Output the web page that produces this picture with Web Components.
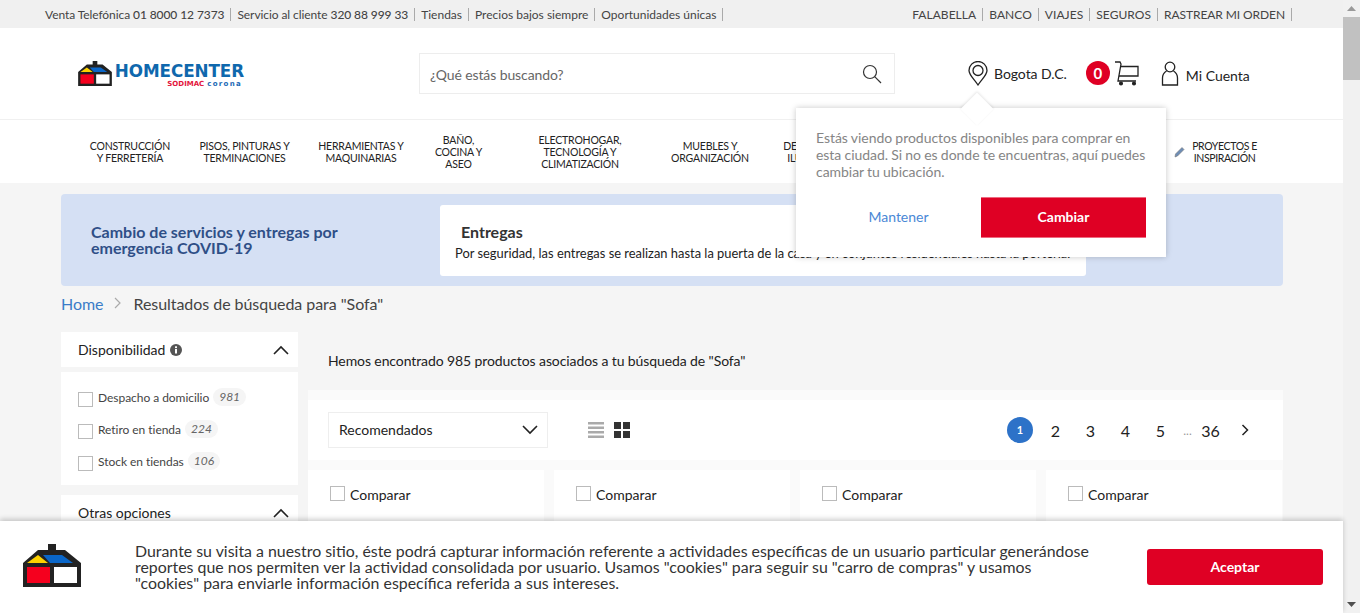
<!DOCTYPE html>
<html lang="es"><head><meta charset="utf-8"><title>Homecenter</title>
<style>
html,body{margin:0;padding:0;height:613px;overflow:hidden;background:#f5f5f5}
body{font-family:Lato,"Liberation Sans",sans-serif;color:#333}
hc-app{display:flex;width:1360px;height:613px;overflow:hidden;position:relative}
</style></head><body>
<hc-app></hc-app>
<script>
const CHEV_UP='<svg width="16" height="10" viewBox="0 0 16 10"><path d="M1 9L8 2l7 7" fill="none" stroke="#222" stroke-width="1.6"/></svg>';
function def(name,html){customElements.define(name,class extends HTMLElement{constructor(){super();this.attachShadow({mode:'open'}).innerHTML=typeof html==='function'?html(this):html;}});}

const HOUSE=`<svg viewBox="0 0 58 43" width="100%" height="100%"><path d="M25 0h8v6h9l16 13v24H0V19L15 6h10z" fill="#222"/><path d="M4 19l11-8 10 8z" fill="#fed200"/><path d="M20 11h19l11 8H27z" fill="#0a66c8"/><rect x="4" y="23" width="23" height="16" fill="#f5001e"/><rect x="31" y="23" width="23" height="16" fill="#fff"/></svg>`;

def('hc-scrollbar',`<style>:host{display:flex;flex-direction:column;width:17px;flex:none;background:#f1f1f1;height:613px}
.b{height:17px;display:flex;align-items:center;justify-content:center;flex:none}.t{height:63px;background:#c1c1c1;flex:none}.s{flex:1}</style>
<div class="b"><svg width="9" height="5"><path d="M0 5L4.500 0 9 5z" fill="#9a9a9a"/></svg></div><div class="t"></div><div class="s"></div>
<div class="b"><svg width="9" height="5"><path d="M0 0h9L4.500 5z" fill="#505050"/></svg></div>`);

def('hc-topbar',`<style>:host{display:flex;justify-content:space-between;height:28px;background:#f0f0f0;font-size:12px;color:#444;padding:0 51px 0 45px;box-sizing:border-box;align-items:center;white-space:nowrap}
.g{display:flex;align-items:center}span{padding-right:6px;margin-right:6px;border-right:1px solid #aaa;line-height:13px;display:block}.up span{letter-spacing:.05px}.ph{letter-spacing:-.08px}</style>
<div class="g"><span class="ph">Venta Telefónica <b style="font-weight:500">01 8000 12 7373</b></span><span class="ph">Servicio al cliente <b style="font-weight:500">320 88 999 33</b></span><span>Tiendas</span><span>Precios bajos siempre</span><span>Oportunidades únicas</span></div>
<div class="g up"><span>FALABELLA</span><span>BANCO</span><span>VIAJES</span><span>SEGUROS</span><span style="margin-right:0;letter-spacing:-.08px">RASTREAR MI ORDEN</span></div>`);

def('hc-logo',`<style>:host{display:flex;align-items:flex-start;gap:3px;width:168px;height:26px}
.h{width:34px;height:25px;flex:none}.t{display:flex;flex-direction:column;align-items:flex-end;width:129px;flex:none}
.m{font:700 16.800px/16px "DejaVu Sans",sans-serif;color:#0f68ad;letter-spacing:-.1px;margin-top:2px;white-space:nowrap}
.s{font:700 7px/8px "DejaVu Sans",sans-serif;margin-top:1px;padding-right:2px;white-space:nowrap}.s b{color:#e3143c}.s i{font-style:normal;color:#1c69b5;letter-spacing:1.3px;margin-left:3px}</style>
<div class="h">${HOUSE}</div><div class="t"><div class="m">HOMECENTER</div><div class="s"><b>SODIMAC</b><i>corona</i></div></div>`);

def('hc-search',`<style>:host{display:flex;align-items:center;justify-content:space-between;width:476px;height:41px;box-sizing:border-box;border:1px solid #ededed;padding:0 12px 0 10px;font-size:14px;color:#666;background:#fff}span{position:relative;top:1px;letter-spacing:-.1px}</style>
<span>¿Qué estás buscando?</span><svg width="20" height="20" viewBox="0 0 20 20" fill="none" stroke="#333" stroke-width="1.200"><circle cx="8" cy="8" r="6.500"/><path d="M12.700 12.700L19 19"/></svg>`);

def('hc-header',`<style>:host{display:flex;align-items:center;height:92px;background:#fff;box-sizing:border-box;border-bottom:1px solid #f0f0f0;padding:0 0 0 78px;color:#222}
hc-logo{margin-right:173px;margin-top:1px}hc-search{margin-right:73px}
.loc{display:flex;align-items:center;gap:6px;font-size:14px;margin-right:19px;margin-top:-1px;letter-spacing:-.05px}
.cart{display:flex;align-items:center;gap:4px;margin-right:21px;margin-top:-1px}
.n{width:24px;height:24px;border-radius:50%;background:#df0024;color:#fff;font:700 15px/24px Lato,sans-serif;text-align:center}
.acc{display:flex;align-items:center;gap:7px;font-size:14px;margin-top:-1px}.acc span{padding-top:4px}</style>
<hc-logo></hc-logo><hc-search></hc-search>
<div class="loc"><svg width="20" height="25" viewBox="0 0 20 25" fill="none" stroke="#222" stroke-width="1.300"><path d="M10 24C6 18 1 14 1 9.500a9 9 0 0 1 18 0C19 14 14 18 10 24z"/><circle cx="10" cy="9.500" r="5"/></svg><span>Bogota D.C.</span></div>
<div class="cart"><div class="n">0</div><svg width="26" height="25" viewBox="0 0 26 25" fill="none" stroke="#222" stroke-width="1.300"><path d="M1 1h5l1 2-3 17h18"/><path d="M6.500 5.500H24v9.500H5"/><circle cx="7" cy="22.500" r="1.400" fill="#222"/><circle cx="20" cy="22.500" r="1.400" fill="#222"/></svg></div>
<div class="acc"><svg width="18" height="25" viewBox="0 0 18 25" fill="none" stroke="#222" stroke-width="1.300"><circle cx="9" cy="6" r="4.800"/><path d="M5.500 10C2.500 12 1.500 14 1.500 17v7h15v-7c0-3-1-5-4-7"/></svg><span>Mi Cuenta</span></div>`);

def('hc-nav-item',h=>`<style>:host{display:flex;align-items:center;justify-content:center;gap:7px;flex:none;width:${h.getAttribute('w')}px;box-sizing:border-box;text-align:center;font-size:10.500px;line-height:12px;color:#222;letter-spacing:-.2px}</style><slot></slot>`);
def('hc-nav',`<style>:host{display:flex;height:63px;background:#fff;padding-left:72px;align-items:center}</style><slot></slot>`);

def('hc-covid',`<style>:host{display:flex;height:92px;background:#d5e0f4;border-radius:4px;box-sizing:border-box;padding:11px 0 10px 30px;margin:11px 60px 0 61px}
h2{margin:-1px 0 0;width:349px;box-sizing:border-box;padding-right:70px;font:700 16px/16px Lato,sans-serif;color:#2f4f87;align-self:center;flex:none}
.c{width:646px;background:#fff;border-radius:3px;box-sizing:border-box;padding:17px 0 0 15px;overflow:hidden}
h3{margin:0 0 4px 6px;font:700 16px/19px Lato,sans-serif;color:#333}p{margin:0;font-size:12.900px;line-height:16px;color:#222;white-space:nowrap}</style>
<h2>Cambio de servicios y entregas por emergencia COVID-19</h2><div class="c"><h3>Entregas</h3><p>Por seguridad, las entregas se realizan hasta la puerta de la casa y en conjuntos residenciales hasta la portería.</p></div>`);

def('hc-crumb',`<style>:host{display:flex;align-items:center;height:20px;margin:7px 0 0 61px;font-size:16px;color:#444;letter-spacing:-.05px}a{color:#3a7cc8}svg{margin:0 12px 0 11px}</style>
<a>Home</a><svg width="7" height="12" viewBox="0 0 7 12" fill="none" stroke="#aaa" stroke-width="1.200"><path d="M1 1l5 5-5 5"/></svg><span>Resultados de búsqueda para "Sofa"</span>`);

def('hc-filter-head',h=>`<style>:host{display:flex;align-items:center;justify-content:space-between;height:35px;background:#fff;padding:0 9px 0 17px;font-size:14px;color:#222}.l{display:flex;align-items:center;gap:5px}</style>
<div class="l"><slot></slot></div>${CHEV_UP}`);
def('hc-check',h=>`<style>:host{display:flex;align-items:center;height:32px;font-size:12px;color:#444}i{width:15px;height:15px;border:1px solid #bbb;box-sizing:border-box;margin-right:5px;flex:none;position:relative;top:1px}span{letter-spacing:-.04px;position:relative;top:-1px}em{font-size:12px;color:#666;background:#f5f5f5;border-radius:9px;padding:0 6px;line-height:18px;margin-left:4px;position:relative;top:-1px}</style>
<i></i><span><slot></slot></span><em>${h.getAttribute('n')}</em>`);
def('hc-sidebar',`<style>:host{display:block;width:237px;flex:none}.o{background:#fff;margin:5px 0 10px;padding:10px 0 7px 17px;height:113px;box-sizing:border-box}</style>
<hc-filter-head>Disponibilidad <svg width="12" height="12" viewBox="0 0 12 12"><circle cx="6" cy="6" r="6" fill="#555"/><rect x="5" y="5" width="2" height="4.500" fill="#fff"/><rect x="5" y="2.300" width="2" height="1.800" fill="#fff"/></svg></hc-filter-head>
<div class="o"><hc-check n="981">Despacho a domicilio</hc-check><hc-check n="224">Retiro en tienda</hc-check><hc-check n="106">Stock en tiendas</hc-check></div>
<hc-filter-head>Otras opciones</hc-filter-head>`);

def('hc-toolbar',`<style>:host{display:flex;align-items:center;height:60px;background:#fff;padding:0 21px 0 20px;color:#222}
.sel{display:flex;align-items:center;justify-content:space-between;width:220px;height:36px;border:1px solid #eee;box-sizing:border-box;padding:0 9px 0 10px;font-size:14px;margin-right:40px}.sel span{position:relative;top:-1px}
.v{display:flex;gap:10px;align-items:center;flex:1}
.p{display:flex;align-items:center;font-size:16px}.p span{width:35px;text-align:center;flex:none}
.one{width:26px;height:26px;border-radius:50%;background:#2d72c8;color:#fff;font:700 11px/26px Lato,sans-serif;text-align:center;margin-right:5px}
.d{font-size:12px;color:#999}</style>
<div class="sel"><span>Recomendados</span><svg width="16" height="10" viewBox="0 0 16 10" fill="none" stroke="#222" stroke-width="1.600"><path d="M1 1l7 7 7-7"/></svg></div>
<div class="v"><svg width="16" height="17" fill="#aaa"><rect y="0" width="16" height="2.500"/><rect y="4.500" width="16" height="2.500"/><rect y="9" width="16" height="2.500"/><rect y="13.500" width="16" height="2.500"/></svg>
<svg width="16" height="16" fill="#333"><rect width="7" height="7"/><rect x="9" width="7" height="7"/><rect y="9" width="7" height="7"/><rect x="9" y="9" width="7" height="7"/></svg></div>
<div class="p"><div class="one">1</div><span>2</span><span>3</span><span>4</span><span>5</span><span class="d" style="width:19px">...</span><span style="width:27px">36</span><span style="display:flex;justify-content:center;margin-left:3px"><svg width="8" height="12" viewBox="0 0 8 12" fill="none" stroke="#222" stroke-width="1.500"><path d="M1.500 1l5 5-5 5"/></svg></span></div>`);

def('hc-card',`<style>:host{display:flex;align-items:flex-start;background:#fff;width:236px;height:60px;box-sizing:border-box;padding:16px 0 0 22px;font-size:14px;color:#222}i{width:15px;height:15px;border:1px solid #bbb;box-sizing:border-box;margin-right:5px;flex:none}span{line-height:17px;position:relative}</style><i></i><span>Comparar</span>`);

def('hc-results',`<style>:host{display:block;width:975px;flex:none;background:#fafafa;height:300px}
.h{height:58px;background:#f5f5f5;padding-left:20px;font-size:14px;line-height:58px;color:#222;margin-bottom:10px;letter-spacing:-.1px}
.g{display:flex;gap:10px;margin-top:10px}</style>
<div class="h">Hemos encontrado 985 productos asociados a tu búsqueda de "Sofa"</div><hc-toolbar></hc-toolbar>
<div class="g"><hc-card></hc-card><hc-card></hc-card><hc-card></hc-card><hc-card></hc-card></div>`);

def('hc-popover',`<style>:host{position:absolute;left:796px;top:108px;width:370px;height:149px;background:#fff;box-shadow:0 0 6px rgba(0,0,0,.22);box-sizing:border-box;padding:21px 20px 20px;color:#858585;font-size:14px;line-height:17px}
.a{position:absolute;left:168px;top:-12px;width:26px;height:26px;background:#fff;transform:rotate(45deg) scale(.9);box-shadow:-1px -1px 3px rgba(0,0,0,.1)}
p{margin:0 -10px 0 0;position:relative;letter-spacing:-.04px;word-spacing:-.3px}.r{display:flex;align-items:center;margin-top:17px;position:relative}
.k{width:165px;text-align:center;color:#4a88d6;font-size:14px;position:relative;top:-1px}.c{width:165px;height:41px;background:#df0024;border-top:1px solid #ee6a80;border-bottom:1px solid #ee6a80;box-sizing:border-box;color:#fff;font-weight:700;text-align:center;line-height:38px;font-size:14px}</style>
<div class="a"></div><p>Estás viendo productos disponibles para comprar en esta ciudad. Si no es donde te encuentras, aquí puedes cambiar tu ubicación.</p><div class="r"><div class="k">Mantener</div><div class="c">Cambiar</div></div>`);

def('hc-cookie',`<style>:host{position:absolute;left:0;bottom:0;width:1343px;height:92px;background:#fff;box-shadow:0 -2px 5px rgba(0,0,0,.2);display:flex;align-items:center;box-sizing:border-box;padding:0 20px 0 23px}
.h{width:58px;height:43px;margin-right:54px;flex:none;margin-top:-3px}p{margin:0;width:960px;flex:none;font-size:15.900px;line-height:16px;color:#333}
.b{margin-left:auto;width:176px;height:36px;border-radius:3px;background:#df0024;color:#fff;font-weight:700;font-size:14px;line-height:36px;text-align:center}</style>
<div class="h">${HOUSE}</div><p>Durante su visita a nuestro sitio, éste podrá capturar información referente a actividades específicas de un usuario particular generándose reportes que nos permiten ver la actividad consolidada por usuario. Usamos "cookies" para seguir su "carro de compras" y usamos "cookies" para enviarle información específica referida a sus intereses.</p><div class="b">Aceptar</div>`);

def('hc-page',`<style>:host{display:block;width:1343px;flex:none;height:613px;overflow:hidden;background:#f5f5f5}.m{display:flex;gap:10px;margin:19px 60px 0 61px}.pr{letter-spacing:-.38px}</style>
<hc-topbar></hc-topbar><hc-header></hc-header>
<hc-nav>
<hc-nav-item w="116">CONSTRUCCIÓN<br>Y FERRETERÍA</hc-nav-item>
<hc-nav-item w="113">PISOS, PINTURAS Y<br>TERMINACIONES</hc-nav-item>
<hc-nav-item w="120">HERRAMIENTAS Y<br>MAQUINARIAS</hc-nav-item>
<hc-nav-item w="75">BAÑO,<br>COCINA Y<br>ASEO</hc-nav-item>
<hc-nav-item w="168">ELECTROHOGAR,<br>TECNOLOGÍA Y<br>CLIMATIZACIÓN</hc-nav-item>
<hc-nav-item w="92">MUEBLES Y<br>ORGANIZACIÓN</hc-nav-item>
<hc-nav-item w="130">DECORACIÓN E<br>ILUMINACIÓN</hc-nav-item>
<hc-nav-item w="371" style="justify-content:flex-end"><svg width="11" height="12" viewBox="0 0 11 12"><path d="M1 11l.5-3L8 1.500l2 2L3.500 10z" fill="#6d8db5" stroke="#777" stroke-width=".6"/></svg><span class="pr">PROYECTOS E<br>INSPIRACIÓN</span></hc-nav-item>
</hc-nav>
<hc-covid></hc-covid><hc-crumb></hc-crumb>
<div class="m"><hc-sidebar></hc-sidebar><hc-results></hc-results></div>`);

customElements.define('hc-app',class extends HTMLElement{constructor(){super();this.attachShadow({mode:'open'}).innerHTML=`<style>:host{display:flex;width:1360px;height:613px;overflow:hidden;position:relative}</style><hc-page></hc-page><hc-scrollbar></hc-scrollbar><hc-popover></hc-popover><hc-cookie></hc-cookie>`;}});
</script></body></html>
